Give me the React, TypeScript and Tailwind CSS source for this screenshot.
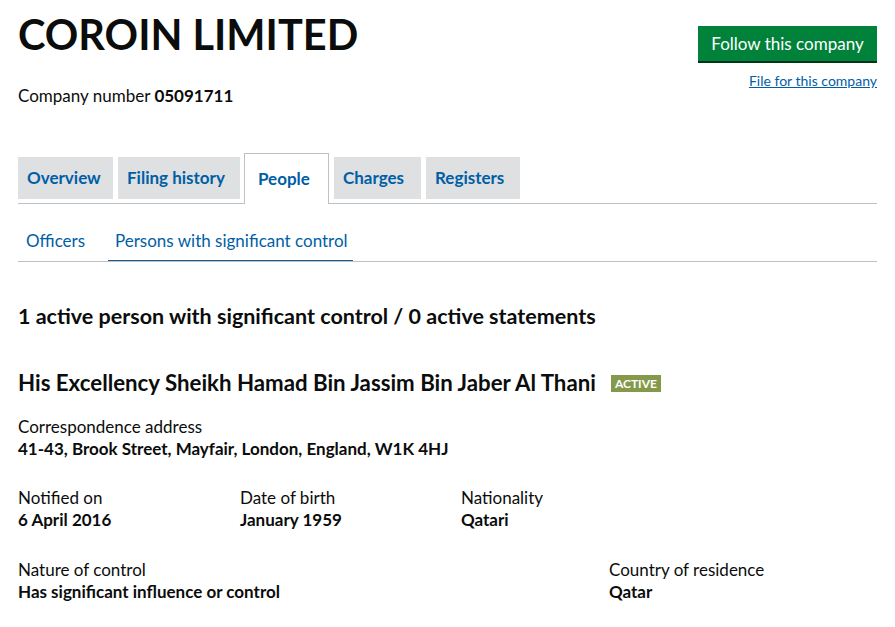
import React from 'react';

const tabs = [
  { label: 'Overview', active: false, w: 'w-[95px]' },
  { label: 'Filing history', active: false, w: 'w-[122px]' },
  { label: 'People', active: true, w: 'w-[85px]' },
  { label: 'Charges', active: false, w: 'w-[87px]' },
  { label: 'Registers', active: false, w: 'w-[94px]' },
];

function Field({ label, value }: { label: string; value: string }) {
  return (
    <div>
      <div className="text-[17px] leading-[22px] text-[#0b0c0c]">{label}</div>
      <div className="text-[17px] leading-[22px] font-bold text-[#0b0c0c]">{value}</div>
    </div>
  );
}

export default function App() {
  return (
    <div className="min-h-screen bg-white px-[18px] font-['Lato',sans-serif] text-[#0b0c0c]">
      <div className="flex justify-between">
        <div>
          <h1 className="pt-[13px] text-[41.5px] leading-[43px] font-bold">COROIN LIMITED</h1>
          <p className="mt-[29px] text-[17px] leading-[22px]">
            Company number <strong className="font-bold">05091711</strong>
          </p>
        </div>
        <div className="flex flex-col items-end pt-[26px]">
          <button className="h-[37px] w-[179px] bg-[#00823b] text-white text-[17px] border-b-2 border-[#003618]">
            Follow this company
          </button>
          <a href="#" className="mt-[9px] text-[14px] leading-[18px] text-[#005ea5] underline">
            File for this company
          </a>
        </div>
      </div>

      <div className="mt-[46px] flex items-end gap-[5px] border-b border-[#bfc1c3]">
        {tabs.map((t) =>
          t.active ? (
            <div
              key={t.label}
              className={`${t.w} -mb-px -ml-px h-[51px] pl-[13px] flex items-center bg-white border border-b-0 border-[#bfc1c3] text-[17px] font-bold text-[#005ea5]`}
            >
              {t.label}
            </div>
          ) : (
            <div
              key={t.label}
              className={`${t.w} mb-[4px] h-[42px] pl-[9px] flex items-center bg-[#dee0e2] text-[17px] font-bold text-[#005ea5]`}
            >
              {t.label}
            </div>
          )
        )}
      </div>

      <div className="mt-[26px] flex border-b border-[#bfc1c3]">
        <div className="w-[90px] pl-[8px] pb-[9px] text-[17px] leading-[22px] text-[#005ea5]">Officers</div>
        <div className="w-[245px] pl-[7px] pb-[8px] text-[17px] leading-[22px] text-[#005ea5] border-b border-[#1d5a8f]">
          Persons with significant control
        </div>
      </div>

      <h2 className="mt-[40px] text-[21.5px] leading-[28px] font-bold">
        1 active person with significant control / 0 active statements
      </h2>

      <div className="mt-[39px] flex items-center">
        <h3 className="text-[22.25px] leading-[28px] font-bold">
          His Excellency Sheikh Hamad Bin Jassim Bin Jaber Al Thani
        </h3>
        <span className="ml-[15px] bg-[#85994b] px-[4px] text-[12px] leading-[17px] font-bold text-white">ACTIVE</span>
      </div>

      <div className="mt-[19px]">
        <Field label="Correspondence address" value="41-43, Brook Street, Mayfair, London, England, W1K 4HJ" />
      </div>

      <div className="mt-[27px] grid grid-cols-[222px_221px_1fr]">
        <Field label="Notified on" value="6 April 2016" />
        <Field label="Date of birth" value="January 1959" />
        <Field label="Nationality" value="Qatari" />
      </div>

      <div className="mt-[28px] grid grid-cols-[591px_1fr]">
        <Field label="Nature of control" value="Has significant influence or control" />
        <Field label="Country of residence" value="Qatar" />
      </div>
    </div>
  );
}
